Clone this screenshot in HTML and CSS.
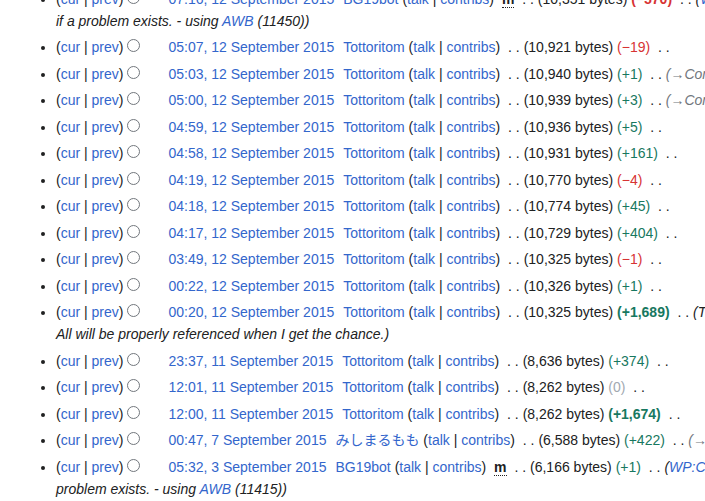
FILE: index.html
```html
<!DOCTYPE html>
<html>
<head>
<meta charset="utf-8">
<link rel="stylesheet" href="styles.css">
</head>
<body>
<ul class="history">
  <li><span class="links">(<a>cur</a> | <a>prev</a>)</span><span class="radio"></span><span class="radio-gap"></span><a class="date">07:16, 12 September 2015</a><span class="user"><a>BG19bot</a> <span class="tools">(<a>talk</a> | <a>contribs</a>)</span></span> <abbr class="minor">m</abbr> <span class="sep">. .</span> <span class="size">(10,351 bytes)</span> <strong class="neg">(−570)</strong> <span class="sep">. .</span> <span class="comment">(<a>WP:CHECKWIKI</a> error fix for #61. Punctuation goes before References. Do general fixes<br>if a problem exists. - using <a>AWB</a> (11450))</span></li>
  <li><span class="links">(<a>cur</a> | <a>prev</a>)</span><span class="radio"></span><span class="radio-gap"></span><a class="date">05:07, 12 September 2015</a><span class="user"><a>Tottoritom</a> <span class="tools">(<a>talk</a> | <a>contribs</a>)</span></span> <span class="sep">. .</span> <span class="size">(10,921 bytes)</span> <span class="neg">(−19)</span> <span class="sep">. .</span></li>
  <li><span class="links">(<a>cur</a> | <a>prev</a>)</span><span class="radio"></span><span class="radio-gap"></span><a class="date">05:03, 12 September 2015</a><span class="user"><a>Tottoritom</a> <span class="tools">(<a>talk</a> | <a>contribs</a>)</span></span> <span class="sep">. .</span> <span class="size">(10,940 bytes)</span> <span class="pos">(+1)</span> <span class="sep">. .</span> <span class="comment auto">(<a>→</a>Controversy)</span></li>
  <li><span class="links">(<a>cur</a> | <a>prev</a>)</span><span class="radio"></span><span class="radio-gap"></span><a class="date">05:00, 12 September 2015</a><span class="user"><a>Tottoritom</a> <span class="tools">(<a>talk</a> | <a>contribs</a>)</span></span> <span class="sep">. .</span> <span class="size">(10,939 bytes)</span> <span class="pos">(+3)</span> <span class="sep">. .</span> <span class="comment auto">(<a>→</a>Controversy)</span></li>
  <li><span class="links">(<a>cur</a> | <a>prev</a>)</span><span class="radio"></span><span class="radio-gap"></span><a class="date">04:59, 12 September 2015</a><span class="user"><a>Tottoritom</a> <span class="tools">(<a>talk</a> | <a>contribs</a>)</span></span> <span class="sep">. .</span> <span class="size">(10,936 bytes)</span> <span class="pos">(+5)</span> <span class="sep">. .</span></li>
  <li><span class="links">(<a>cur</a> | <a>prev</a>)</span><span class="radio"></span><span class="radio-gap"></span><a class="date">04:58, 12 September 2015</a><span class="user"><a>Tottoritom</a> <span class="tools">(<a>talk</a> | <a>contribs</a>)</span></span> <span class="sep">. .</span> <span class="size">(10,931 bytes)</span> <span class="pos">(+161)</span> <span class="sep">. .</span></li>
  <li><span class="links">(<a>cur</a> | <a>prev</a>)</span><span class="radio"></span><span class="radio-gap"></span><a class="date">04:19, 12 September 2015</a><span class="user"><a>Tottoritom</a> <span class="tools">(<a>talk</a> | <a>contribs</a>)</span></span> <span class="sep">. .</span> <span class="size">(10,770 bytes)</span> <span class="neg">(−4)</span> <span class="sep">. .</span></li>
  <li><span class="links">(<a>cur</a> | <a>prev</a>)</span><span class="radio"></span><span class="radio-gap"></span><a class="date">04:18, 12 September 2015</a><span class="user"><a>Tottoritom</a> <span class="tools">(<a>talk</a> | <a>contribs</a>)</span></span> <span class="sep">. .</span> <span class="size">(10,774 bytes)</span> <span class="pos">(+45)</span> <span class="sep">. .</span></li>
  <li><span class="links">(<a>cur</a> | <a>prev</a>)</span><span class="radio"></span><span class="radio-gap"></span><a class="date">04:17, 12 September 2015</a><span class="user"><a>Tottoritom</a> <span class="tools">(<a>talk</a> | <a>contribs</a>)</span></span> <span class="sep">. .</span> <span class="size">(10,729 bytes)</span> <span class="pos">(+404)</span> <span class="sep">. .</span></li>
  <li><span class="links">(<a>cur</a> | <a>prev</a>)</span><span class="radio"></span><span class="radio-gap"></span><a class="date">03:49, 12 September 2015</a><span class="user"><a>Tottoritom</a> <span class="tools">(<a>talk</a> | <a>contribs</a>)</span></span> <span class="sep">. .</span> <span class="size">(10,325 bytes)</span> <span class="neg">(−1)</span> <span class="sep">. .</span></li>
  <li><span class="links">(<a>cur</a> | <a>prev</a>)</span><span class="radio"></span><span class="radio-gap"></span><a class="date">00:22, 12 September 2015</a><span class="user"><a>Tottoritom</a> <span class="tools">(<a>talk</a> | <a>contribs</a>)</span></span> <span class="sep">. .</span> <span class="size">(10,326 bytes)</span> <span class="pos">(+1)</span> <span class="sep">. .</span></li>
  <li><span class="links">(<a>cur</a> | <a>prev</a>)</span><span class="radio"></span><span class="radio-gap"></span><a class="date">00:20, 12 September 2015</a><span class="user"><a>Tottoritom</a> <span class="tools">(<a>talk</a> | <a>contribs</a>)</span></span> <span class="sep">. .</span> <span class="size">(10,325 bytes)</span> <strong class="pos">(+1,689)</strong> <span class="sep">. .</span> <span class="comment">(This section has been added with new sources.<br>All will be properly referenced when I get the chance.)</span></li>
  <li><span class="links">(<a>cur</a> | <a>prev</a>)</span><span class="radio"></span><span class="radio-gap"></span><a class="date">23:37, 11 September 2015</a><span class="user"><a>Tottoritom</a> <span class="tools">(<a>talk</a> | <a>contribs</a>)</span></span> <span class="sep">. .</span> <span class="size">(8,636 bytes)</span> <span class="pos">(+374)</span> <span class="sep">. .</span></li>
  <li><span class="links">(<a>cur</a> | <a>prev</a>)</span><span class="radio"></span><span class="radio-gap"></span><a class="date">12:01, 11 September 2015</a><span class="user"><a>Tottoritom</a> <span class="tools">(<a>talk</a> | <a>contribs</a>)</span></span> <span class="sep">. .</span> <span class="size">(8,262 bytes)</span> <span class="null">(0)</span> <span class="sep">. .</span></li>
  <li><span class="links">(<a>cur</a> | <a>prev</a>)</span><span class="radio"></span><span class="radio-gap"></span><a class="date">12:00, 11 September 2015</a><span class="user"><a>Tottoritom</a> <span class="tools">(<a>talk</a> | <a>contribs</a>)</span></span> <span class="sep">. .</span> <span class="size">(8,262 bytes)</span> <strong class="pos">(+1,674)</strong> <span class="sep">. .</span></li>
  <li><span class="links">(<a>cur</a> | <a>prev</a>)</span><span class="radio"></span><span class="radio-gap"></span><a class="date">00:47, 7 September 2015</a><span class="user"><a class="cjk">みしまるもも</a> <span class="tools">(<a>talk</a> | <a>contribs</a>)</span></span> <span class="sep">. .</span> <span class="size">(6,588 bytes)</span> <span class="pos">(+422)</span> <span class="sep">. .</span> <span class="comment auto">(<a>→</a>Controversy)</span></li>
  <li><span class="links">(<a>cur</a> | <a>prev</a>)</span><span class="radio"></span><span class="radio-gap"></span><a class="date">05:32, 3 September 2015</a><span class="user"><a>BG19bot</a> <span class="tools">(<a>talk</a> | <a>contribs</a>)</span></span> <abbr class="minor">m</abbr> <span class="sep">. .</span> <span class="size">(6,166 bytes)</span> <span class="pos">(+1)</span> <span class="sep">. .</span> <span class="comment">(<a>WP:CHECKWIKI</a> error fix for #16. Remove Unicode control characters. Do general fixes if a<br>problem exists. - using <a>AWB</a> (11415))</span></li>
</ul>
</body>
</html>
```

FILE: styles.css
```css
html, body {
  margin: 0;
  padding: 0;
  background: #ffffff;
  overflow: hidden;
}

body {
  font-family: "Liberation Sans", Arial, sans-serif;
  font-size: 14px;
  color: #202122;
  width: 705px;
  height: 501px;
}

.history {
  width: 1400px;
  margin: -12px 0 0 0;
  padding: 0 0 0 56px;
  list-style: disc;
  line-height: 22px;
}

.history li {
  margin: 0 0 4.47px 0;
  white-space: nowrap;
}

a {
  color: #3366cc;
  text-decoration: none;
}

.radio {
  display: inline-block;
  width: 13px;
  height: 13px;
  box-sizing: border-box;
  border: 1px solid #72777d;
  border-radius: 50%;
  vertical-align: text-top;
  margin-left: 4px;
}

.radio-gap {
  display: inline-block;
  width: 28px;
  height: 1px;
}

.user {
  margin-left: 9px;
}

.cjk {
  font-family: "Noto Sans CJK JP", sans-serif;
  line-height: 1;
  vertical-align: baseline;
}

.minor {
  font-weight: bold;
  text-decoration: none;
  border-bottom: 1px dotted #202122;
  margin-left: 4px;
}

.sep {
  margin-left: 4px;
}

.pos {
  color: #177860;
}

.neg {
  color: #d73333;
}

.null {
  color: #a2a9b1;
}

.comment {
  font-style: italic;
  color: #202122;
}

.comment.auto {
  color: #72777d;
}

.comment.auto a {
  color: #72777d;
}
```
